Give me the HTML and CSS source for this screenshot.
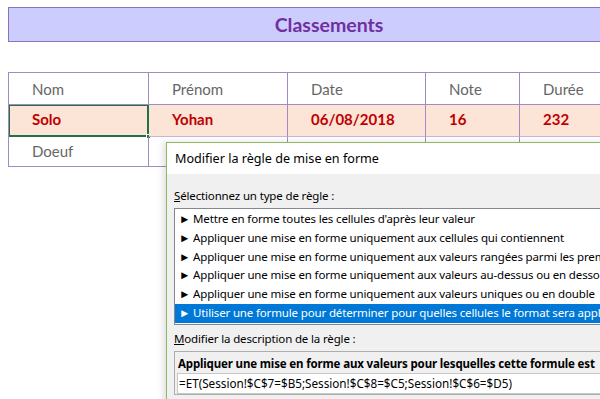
FILE: index.html
```html
<!DOCTYPE html>
<html lang="fr">
<head>
<meta charset="utf-8">
<title>Classements</title>
<link rel="stylesheet" href="styles.css">
</head>
<body>
<div class="sheet">
  <div class="banner">Classements</div>
  <div class="grid">
    <div class="cell head">Nom</div>
    <div class="cell head">Prénom</div>
    <div class="cell head">Date</div>
    <div class="cell head">Note</div>
    <div class="cell head">Durée</div>
    <div class="cell hl sel">Solo<span class="handle"></span></div>
    <div class="cell hl">Yohan</div>
    <div class="cell hl">06/08/2018</div>
    <div class="cell hl">16</div>
    <div class="cell hl">232</div>
    <div class="cell plain">Doeuf</div>
    <div class="cell plain"></div>
    <div class="cell plain"></div>
    <div class="cell plain"></div>
    <div class="cell plain"></div>
  </div>
</div>

<div class="dialog">
  <div class="dlg-title">Modifier la règle de mise en forme</div>
  <div class="dlg-body">
    <div class="label"><u>S</u>électionnez un type de règle :</div>
    <ul class="list">
      <li>► Mettre en forme toutes les cellules d'après leur valeur</li>
      <li>► Appliquer une mise en forme uniquement aux cellules qui contiennent</li>
      <li>► Appliquer une mise en forme uniquement aux valeurs rangées parmi les premières</li>
      <li>► Appliquer une mise en forme uniquement aux valeurs au-dessus ou en dessous</li>
      <li>► Appliquer une mise en forme uniquement aux valeurs uniques ou en double</li>
      <li class="active">► Utiliser une formule pour déterminer pour quelles cellules le format sera appliqué</li>
    </ul>
    <div class="label label2"><u>M</u>odifier la description de la règle :</div>
    <div class="desc">
      <div class="desc-title">Appliquer une mise en forme aux valeurs pour lesquelles cette formule est</div>
      <div class="formula">=ET(Session!$C$7=$B5;Session!$C$8=$C5;Session!$C$6=$D5)</div>
    </div>
  </div>
</div>
</body>
</html>
```

FILE: styles.css
```css
html, body {
  margin: 0;
  padding: 0;
  background: #ffffff;
  overflow: hidden;
  width: 600px;
  height: 399px;
}

.sheet {
  padding: 7px 0 0 8px;
  font-family: Lato, "Liberation Sans", sans-serif;
}

.banner {
  width: 640px;
  height: 33px;
  background: #ccccff;
  border: 1px solid #8a73b8;
  color: #7030a0;
  font-weight: bold;
  font-size: 19.5px;
  display: flex;
  align-items: center;
  justify-content: center;
}

.grid {
  margin-top: 30px;
  display: grid;
  grid-template-columns: 140px 139px 138px 94px 120px;
  grid-template-rows: 32px 32px 30px;
  width: 631px;
  border-top: 1px solid #a28bc4;
  border-left: 1px solid #a28bc4;
}

.cell {
  border-right: 1px solid #a28bc4;
  border-bottom: 1px solid #a28bc4;
  padding-left: 23px;
  display: flex;
  align-items: center;
  font-size: 15px;
  position: relative;
}

.head {
  color: #666666;
}

.hl {
  background: #fce4d6;
  color: #c00000;
  font-weight: bold;
  border-bottom-color: #c9b3d9;
  padding-bottom: 3px;
}

.plain {
  color: #666666;
  padding-bottom: 1px;
}

.sel {
  box-shadow: inset 0 0 0 1px #217346;
  border-right-color: #217346;
  border-bottom-color: #217346;
}

.handle {
  position: absolute;
  right: -3px;
  bottom: -3px;
  width: 5px;
  height: 5px;
  background: #217346;
  border: 1px solid #ffffff;
  box-sizing: border-box;
}

.dialog {
  position: absolute;
  left: 166px;
  top: 142px;
  width: 480px;
  height: 300px;
  border: 1px solid #8dbb63;
  background: #f0f0f0;
  font-family: "Noto Sans", "Open Sans", sans-serif;
  font-size: 11.5px;
  letter-spacing: -0.15px;
  color: #000000;
  box-shadow: -3px 0 6px rgba(0, 0, 0, 0.12);
}

.dlg-title {
  background: #ffffff;
  height: 31px;
  padding-left: 8px;
  display: flex;
  align-items: center;
  font-size: 12.6px;
  letter-spacing: 0;
}

.dlg-body {
  padding: 13px 0 0 7px;
}

.label {
  height: 17px;
  line-height: 17px;
  white-space: nowrap;
}

.list {
  list-style: none;
  margin: 4px 0 0 0;
  padding: 1px 0 1px 2px;
  background: #ffffff;
  border: 1px solid #828790;
  white-space: nowrap;
  overflow: hidden;
}

.list li {
  height: 18.8px;
  line-height: 18.8px;
  padding-left: 2px;
}

.list li.active {
  background: #0078d7;
  color: #ffffff;
  margin-left: -2px;
  padding-left: 4px;
}

.label2 {
  margin-top: 5px;
}

.desc {
  margin-top: 4px;
  border: 1px solid #adadad;
  background: #f0f0f0;
  padding: 2px 0 0 2px;
  white-space: nowrap;
  overflow: hidden;
}

.desc-title {
  font-weight: bold;
  height: 19px;
  line-height: 19px;
  padding-left: 1px;
}

.formula {
  background: #ffffff;
  border: 1px solid #c8c8c8;
  height: 19px;
  line-height: 19px;
  padding-left: 1px;
  font-size: 11.7px;
  letter-spacing: 0;
}
```
